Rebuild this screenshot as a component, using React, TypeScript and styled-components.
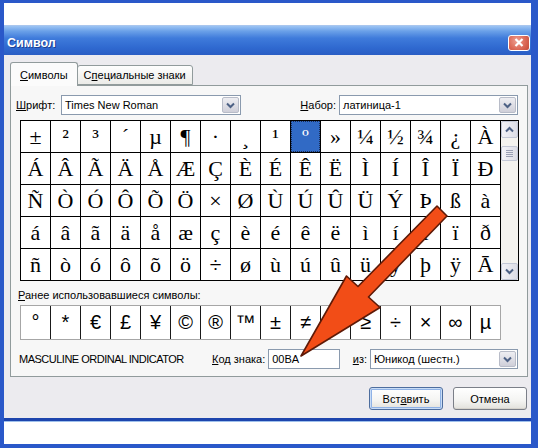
import React from "react";
import styled, { createGlobalStyle } from "styled-components";

const Global = createGlobalStyle`
  html, body { margin: 0; padding: 0; background: #2a58c9; }
  body { font-family: "Liberation Sans", Arial, sans-serif; font-size: 11px; color: #000; }
  * { box-sizing: border-box; }
`;

const Frame = styled.div`
  position: relative;
  width: 538px;
  height: 448px;
  background: #2a58c9;
  padding: 3px 7px 4px 4px;
  display: flex;
  flex-direction: column;
  overflow: hidden;
`;

const TopStrip = styled.div`
  height: 23px;
  flex: none;
  background: #fff;
  border-bottom: 1px solid #a9c6ee;
`;

const TitleBar = styled.div`
  height: 29px;
  flex: none;
  display: flex;
  align-items: center;
  justify-content: space-between;
  padding: 0 1px 0 3px;
  background: linear-gradient(#9cc4f4 0%, #6aa0e8 18%, #3f7bdb 42%, #2f69d0 75%, #2a5dc4 100%);
`;

const TitleText = styled.span`
  font-family: "Liberation Sans", Arial, sans-serif;
  font-weight: bold;
  font-size: 12.5px;
  color: #fff;
  text-shadow: 1px 1px 0 #1b3f93;
  padding-top: 4px;
`;

const CloseButton = styled.div`
  width: 22px;
  height: 16px;
  margin-top: 4px;
  border: 1px solid #fff;
  border-radius: 3px;
  background: radial-gradient(circle at 40% 35%, #eea092 0%, #dc6a58 55%, #c44a38 100%);
  display: flex;
  align-items: center;
  justify-content: center;
`;

const Body = styled.div`
  flex: 1;
  display: flex;
  flex-direction: column;
  background: #ecebef;
  padding: 7px 3px 0 6px;
`;

const TabRow = styled.div`
  display: flex;
  align-items: flex-end;
  height: 23px;
  position: relative;
  z-index: 1;
`;

const Tab = styled.div<{ $active?: boolean }>`
  height: ${(p) => (p.$active ? "24px" : "20px")};
  margin-bottom: ${(p) => (p.$active ? "-1px" : "0")};
  padding: 0 ${(p) => (p.$active ? "9px" : "6px")};
  display: flex;
  align-items: center;
  border: 1px solid #919b9c;
  border-bottom: ${(p) => (p.$active ? "none" : "1px solid #919b9c")};
  border-radius: 3px 3px 0 0;
  background: ${(p) => (p.$active ? "#fbfbfb" : "linear-gradient(#fefefe, #ebebe8)")};
  margin-left: ${(p) => (p.$active ? "0" : "-1px")};
`;

const Panel = styled.div`
  width: 518px;
  height: 292px;
  border: 1px solid #919b9c;
  background: #f7f7f7;
  display: flex;
  flex-direction: column;
`;

const U = styled.span`
  text-decoration: underline;
`;

const FontRow = styled.div`
  display: flex;
  align-items: center;
  height: 20px;
  margin-top: 9px;
  padding: 0 9px 0 5px;
`;

const FieldLabel = styled.span<{ $w?: number }>`
  width: ${(p) => (p.$w ? `${p.$w}px` : "auto")};
  flex: none;
  white-space: nowrap;
`;

const Spacer = styled.div`
  flex: 1;
`;

const SelectBox = styled.div<{ $w: number }>`
  width: ${(p) => p.$w}px;
  height: 20px;
  flex: none;
  display: flex;
  align-items: center;
  justify-content: space-between;
  border: 1px solid #8a9aae;
  background: #fff;
  padding-left: 3px;
`;

const SelectText = styled.span`
  white-space: nowrap;
`;

const DropButton = styled.div`
  width: 17px;
  height: 16px;
  margin: 1px;
  border: 1px solid #b8bcc8;
  border-radius: 2px;
  background: linear-gradient(#eeeef2, #cfcfd9);
  display: flex;
  align-items: center;
  justify-content: center;
`;

const GridBox = styled.div`
  margin: 5px 0 0 9px;
  width: 499px;
  height: 161px;
  border: 1px solid #000;
  display: flex;
  background: #fff;
`;

const CharGrid = styled.div`
  display: grid;
  grid-template-columns: repeat(16, 29px);
  grid-template-rows: repeat(5, 31px);
  gap: 1px;
  background: #000;
  border-right: 1px solid #000;
`;

const CharCell = styled.div<{ $selected?: boolean }>`
  background: ${(p) => (p.$selected ? "#316ac5" : "#fff")};
  color: ${(p) => (p.$selected ? "#fff" : "#000")};
  outline: ${(p) => (p.$selected ? "1px dotted #1a2d55" : "none")};
  outline-offset: -1px;
  font-family: "Liberation Serif", "Times New Roman", serif;
  font-size: 22px;
  line-height: 31px;
  text-align: center;
  overflow: hidden;
`;

const ScrollBar = styled.div`
  width: 17px;
  display: flex;
  flex-direction: column;
  background: #f4f3ef;
`;

const ScrollButton = styled.div`
  width: 17px;
  height: 17px;
  flex: none;
  border: 1px solid #c3c8d6;
  border-radius: 2px;
  background: linear-gradient(90deg, #f2f2f6, #dcdde6);
  display: flex;
  align-items: center;
  justify-content: center;
`;

const ScrollTrack = styled.div`
  flex: 1;
  padding-top: 8px;
`;

const ScrollThumb = styled.div`
  width: 17px;
  height: 15px;
  border: 1px solid #c3c8d6;
  border-radius: 2px;
  background: linear-gradient(90deg, #f4f4f8, #dcdde6);
  display: flex;
  flex-direction: column;
  align-items: center;
  justify-content: center;
  gap: 1px;
`;

const Grip = styled.div`
  width: 7px;
  height: 1px;
  background: #9aa0b4;
`;

const RecentLabel = styled.div`
  margin: 8px 0 0 7px;
  height: 13px;
  line-height: 13px;
`;

const RecentRow = styled.div`
  margin: 3px 0 0 9px;
  width: 481px;
  display: grid;
  grid-template-columns: repeat(16, 29px);
  grid-template-rows: 33px;
  gap: 1px;
  background: #1a1a1a;
  border: 1px solid #a6a6a6;
`;

const RecentCell = styled.div`
  background: #fff;
  font-family: "Liberation Sans", Arial, sans-serif;
  font-size: 20px;
  line-height: 33px;
  text-align: center;
  overflow: hidden;
`;

const InfoRow = styled.div`
  display: flex;
  align-items: center;
  height: 20px;
  margin-top: 9px;
  padding: 0 9px 0 8px;
`;

const CharName = styled.span`
  width: 193px;
  flex: none;
  white-space: nowrap;
  letter-spacing: -0.5px;
`;

const CodeInput = styled.div`
  width: 72px;
  height: 20px;
  flex: none;
  border: 1px solid #8a9aae;
  background: #fff;
  padding-left: 3px;
  line-height: 18px;
  margin-left: 3px;
`;

const ButtonRow = styled.div`
  display: flex;
  justify-content: flex-end;
  gap: 10px;
  margin: 10px 1px 0 0;
`;

const Button = styled.div<{ $default?: boolean }>`
  width: 74px;
  height: 23px;
  display: flex;
  align-items: center;
  justify-content: center;
  border: 1px solid ${(p) => (p.$default ? "#4d6d9e" : "#7b7f88")};
  border-radius: 3px;
  background: linear-gradient(#ffffff 0%, #f4f4f2 60%, #e2e1dc 100%);
  box-shadow: ${(p) =>
    p.$default ? "inset 0 0 0 1px #c8dcf6, inset 0 0 0 2px #8fb2e6" : "inset 0 -1px 0 #d6d3cc"};
`;

const BottomLine = styled.div`
  height: 4px;
  flex: none;
  background: #1d45ad;
  border-bottom: 1px solid #9fc0ec;
`;

const BottomStrip = styled.div`
  height: 22px;
  flex: none;
  background: #fff;
`;

const Overlay = styled.svg`
  position: absolute;
  left: 0;
  top: 0;
  pointer-events: none;
`;

const Chevron = ({ up }: { up?: boolean }) => (
  <svg width="9" height="7" viewBox="0 0 9 7">
    <path
      d={up ? "M1 5.5 L4.5 2 L8 5.5" : "M1 1.5 L4.5 5 L8 1.5"}
      fill="none"
      stroke="#4d6185"
      strokeWidth="2"
    />
  </svg>
);

const rows: string[] = [
  "±²³´µ¶·¸¹º»¼½¾¿À",
  "ÁÂÃÄÅÆÇÈÉÊËÌÍÎÏÐ",
  "ÑÒÓÔÕÖ×ØÙÚÛÜÝÞßà",
  "áâãäåæçèéêëìíîïð",
  "ñòóôõö÷øùúûüýþÿĀ",
];

const recent = ["°", "*", "€", "£", "¥", "©", "®", "™", "±", "≠", "≤", "≥", "÷", "×", "∞", "µ"];

export default function App() {
  return (
    <Frame>
      <Global />
      <TopStrip />
      <TitleBar>
        <TitleText>Символ</TitleText>
        <CloseButton>
          <svg width="10" height="9" viewBox="0 0 10 9">
            <path d="M1.5 1 L8.5 8 M8.5 1 L1.5 8" stroke="#fff" strokeWidth="2.2" />
          </svg>
        </CloseButton>
      </TitleBar>
      <Body>
        <TabRow>
          <Tab $active>
            <U>С</U>имволы
          </Tab>
          <Tab>
            С<U>п</U>ециальные знаки
          </Tab>
        </TabRow>
        <Panel>
          <FontRow>
            <FieldLabel $w={45}>
              <U>Ш</U>рифт:
            </FieldLabel>
            <SelectBox $w={180}>
              <SelectText>Times New Roman</SelectText>
              <DropButton>
                <Chevron />
              </DropButton>
            </SelectBox>
            <Spacer />
            <FieldLabel>
              <U>Н</U>абор:
            </FieldLabel>
            <SelectBox $w={179} style={{ marginLeft: 3 }}>
              <SelectText>латиница-1</SelectText>
              <DropButton>
                <Chevron />
              </DropButton>
            </SelectBox>
          </FontRow>
          <GridBox>
            <CharGrid>
              {rows.flatMap((r, ri) =>
                Array.from(r).map((ch, ci) => (
                  <CharCell key={`${ri}-${ci}`} $selected={ri === 0 && ci === 9}>
                    {ch}
                  </CharCell>
                ))
              )}
            </CharGrid>
            <ScrollBar>
              <ScrollButton>
                <Chevron up />
              </ScrollButton>
              <ScrollTrack>
                <ScrollThumb>
                  <Grip />
                  <Grip />
                  <Grip />
                  <Grip />
                </ScrollThumb>
              </ScrollTrack>
              <ScrollButton>
                <Chevron />
              </ScrollButton>
            </ScrollBar>
          </GridBox>
          <RecentLabel>
            <U>Р</U>анее использовавшиеся символы:
          </RecentLabel>
          <RecentRow>
            {recent.map((c, i) => (
              <RecentCell key={i}>{c}</RecentCell>
            ))}
          </RecentRow>
          <InfoRow>
            <CharName>MASCULINE ORDINAL INDICATOR</CharName>
            <FieldLabel>
              <U>К</U>од знака:
            </FieldLabel>
            <CodeInput>00BA</CodeInput>
            <Spacer />
            <FieldLabel>
              <U>и</U>з:
            </FieldLabel>
            <SelectBox $w={148} style={{ marginLeft: 3 }}>
              <SelectText>Юникод (шестн.)</SelectText>
              <DropButton>
                <Chevron />
              </DropButton>
            </SelectBox>
          </InfoRow>
        </Panel>
        <ButtonRow>
          <Button $default>
            Вст<U>а</U>вить
          </Button>
          <Button>Отмена</Button>
        </ButtonRow>
      </Body>
      <BottomLine />
      <BottomStrip />
      <Overlay width="538" height="448" viewBox="0 0 538 448">
        <polygon
          points="437,206 447,216 368.5,297 380,307.5 301,356 346.5,276 358,286.5"
          fill="#f24d17"
          stroke="#5e1a07"
          strokeWidth="1.6"
          strokeLinejoin="round"
        />
      </Overlay>
    </Frame>
  );
}
